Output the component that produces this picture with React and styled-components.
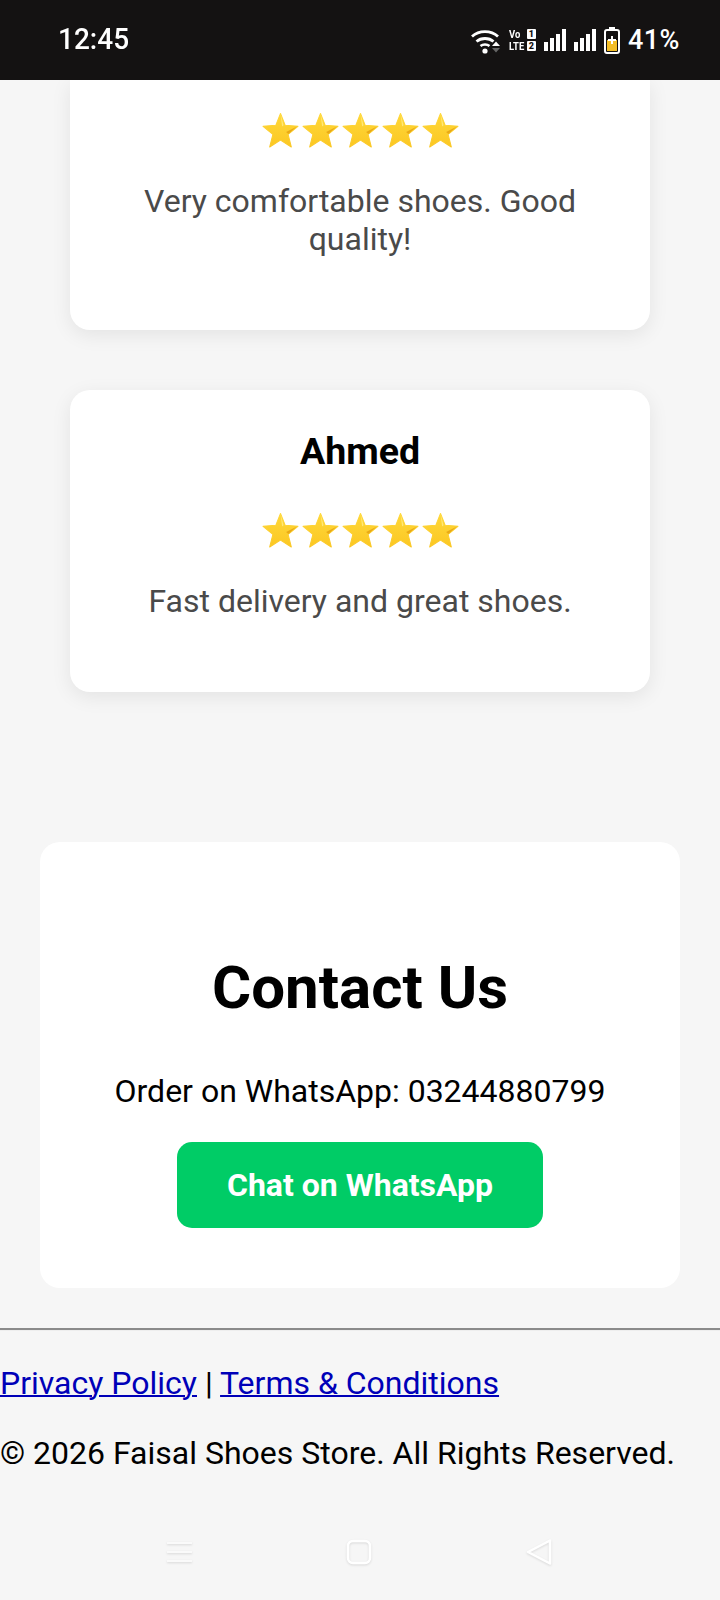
import React from "react";
import styled, { createGlobalStyle } from "styled-components";

const Global = createGlobalStyle`
  html, body { margin: 0; padding: 0; background: #f6f6f6; }
  body { font-family: Roboto, "Liberation Sans", sans-serif; }
`;
const Page = styled.div`
  width: 720px; height: 1600px; overflow: hidden; background: #f6f6f6;
  display: flex; flex-direction: column; color: #000;
`;
const StatusBar = styled.header`
  height: 80px; flex: none; background: #141212; color: #fff;
  display: flex; align-items: center; justify-content: space-between;
  padding: 0 40px 0 58px; position: relative; z-index: 2;
`;
const Clock = styled.span`font-size: 28px; font-weight: 500; line-height: 1; transform: scaleY(1.05);`;
const StatusIcons = styled.div`display: flex; align-items: center;`;
const Net = styled.div`
  display: grid; grid-template-columns: 18px 9px; font-size: 11.5px; line-height: 12px; font-weight: 700;
  margin: 0 8px 0 7px; width: 27px;
  & > span { transform: scaleX(.82); transform-origin: left; white-space: nowrap; }
  & > b { font-size: 9px; background: #fff; color: #141212; border-radius: 1px; line-height: 10px; height: 10px; text-align: center; margin-top: 1px; }
`;
const Percent = styled.span`font-size: 27px; font-weight: 500; letter-spacing: .5px; margin-left: 8px;`;
const Reviews = styled.section`
  display: flex; flex-direction: column; gap: 60px; padding: 0 70px; flex: none;
`;
const Card = styled.article`
  background: #fff; border-radius: ${p => (p.$cut ? "0 0 20px 20px" : "20px")};
  box-shadow: 0 5px 20px rgba(0,0,0,.08); text-align: center; height: ${p => p.$h}px;
  box-sizing: border-box; padding-top: ${p => p.$top}px;
`;
const Name = styled.h3`margin: 0 0 40px; font-size: 37.5px; line-height: 41px; font-weight: 700;`;
const Stars = styled.div`
  display: flex; justify-content: center; gap: 3px; height: 37px; margin-bottom: 33px;
`;
const Comment = styled.p`
  margin: 0; padding: 0 40px; font-size: 32px; line-height: 38px; color: #4a4a4a;
`;
const Contact = styled.section`
  margin: 150px 40px 0; height: 446px; box-sizing: border-box; flex: none; background: #fff; border-radius: 20px;
  padding-top: 113px; text-align: center; display: flex; flex-direction: column; align-items: center;
`;
const Title = styled.h2`margin: 0; font-size: 60px; line-height: 66px; font-weight: 700;`;
const Order = styled.p`margin: 52px 0 0; font-size: 32px; line-height: 36px;`;
const Chat = styled.a`
  display: flex; align-items: center; justify-content: center; margin-top: 33px;
  width: 366px; height: 86px; border-radius: 15px; background: #00cc66; color: #fff;
  font-size: 32px; font-weight: 700; text-decoration: none;
`;
const Rule = styled.hr`
  margin: 40px 0 0; height: 0; border: 0; border-top: 2px solid #8b8b8b; border-bottom: 1px solid #eee; flex: none;
`;
const Footer = styled.footer`font-size: 32px; line-height: 36px; flex: none;`;
const Links = styled.p`margin: 34px 0 0; color: #000;`;
const Legal = styled.a`color: #0000b8; text-decoration: underline; text-decoration-thickness: 2px;`;
const Copy = styled.p`margin: 34px 0 0; white-space: nowrap;`;
const NavBar = styled.nav`
  flex: none; margin-top: 66px; display: flex; justify-content: space-between; align-items: center;
  padding: 0 168px 0 167px; height: 30px;
`;

const Star = () => (
  <svg width="37" height="37" viewBox="0 0 36 36" aria-hidden="true">
    <defs>
      <linearGradient id="sg" x1="0" y1="0" x2="0" y2="1">
        <stop offset="0" stopColor="#ffd83a" />
        <stop offset="1" stopColor="#fbc723" />
      </linearGradient>
    </defs>
    <path d="M18 1.5 22.6 13 35 13.9 25.4 21.8 28.5 34 18 27.3 7.5 34 10.6 21.8 1 13.9 13.4 13Z" fill="url(#sg)" stroke="url(#sg)" strokeWidth="1" strokeLinejoin="round" />
    <path d="M18 2 21 13 19.6 14Z" fill="#ffe97a" />
    <path d="M34 14.2 25.6 21.4 23.5 19.5Z" fill="#e9a915" />
  </svg>
);
const FiveStars = () => <Stars>{[0,1,2,3,4].map(i => <Star key={i} />)}</Stars>;

const Wifi = () => (
  <svg width="32" height="27" viewBox="0 0 32 27" fill="none" aria-hidden="true">
    <path d="M2 9.500C9 3 21 3 28 9.500" stroke="#fff" strokeWidth="2.800" />
    <path d="M6.500 14.500C11 10.500 19 10.500 23.500 14.500" stroke="#fff" strokeWidth="2.800" />
    <path d="M10.500 19C13 17 17 17 19.500 19" stroke="#fff" strokeWidth="2.600" />
    <circle cx="15" cy="24" r="2.600" fill="#fff" />
    <path d="M26 14.500 30 19H22Z" fill="#fff" />
    <path d="M22 21H30L26 25.500Z" fill="#666" />
  </svg>
);
const SignalIcon = styled.svg`margin-right: 8px;`;
const Signal = () => (
  <SignalIcon width="22" height="22" viewBox="0 0 22 22" fill="#fff" aria-hidden="true">
    <rect x="0" y="13" width="4" height="9" />
    <rect x="6" y="9" width="4" height="13" />
    <rect x="12" y="5" width="4" height="17" />
    <rect x="18" y="0" width="4" height="22" />
  </SignalIcon>
);
const Battery = () => (
  <svg width="16" height="27" viewBox="0 0 16 27" aria-hidden="true">
    <rect x="5" y="0" width="6" height="3" fill="#fff" />
    <rect x="1" y="3" width="14" height="23" rx="2" fill="#141212" stroke="#fff" strokeWidth="2" />
    <rect x="3" y="13" width="10" height="11" fill="#f3bd25" />
    <path d="M7 9h2v3h3v2H9v3H7v-3H4v-2h3Z" fill="#fff" />
  </svg>
);
const NavIcon = styled.svg`overflow: visible; filter: drop-shadow(0 1px 1px rgba(0,0,0,.12));`;

export default function App() {
  return (
    <Page>
      <Global />
      <StatusBar>
        <Clock>12:45</Clock>
        <StatusIcons>
          <Wifi />
          <Net><span>Vo</span><b>1</b><span>LTE</span><b>2</b></Net>
          <Signal />
          <Signal />
          <Battery />
          <Percent>41%</Percent>
        </StatusIcons>
      </StatusBar>
      <Reviews>
        <Card $cut $h={250} $top={32}>
          <FiveStars />
          <Comment>Very comfortable shoes. Good quality!</Comment>
        </Card>
        <Card $h={302} $top={41}>
          <Name>Ahmed</Name>
          <FiveStars />
          <Comment>Fast delivery and great shoes.</Comment>
        </Card>
      </Reviews>
      <Contact>
        <Title>Contact Us</Title>
        <Order>Order on WhatsApp: 03244880799</Order>
        <Chat href="#">Chat on WhatsApp</Chat>
      </Contact>
      <Rule />
      <Footer>
        <Links><Legal href="#">Privacy Policy</Legal> | <Legal href="#">Terms &amp; Conditions</Legal></Links>
        <Copy>© 2026 Faisal Shoes Store. All Rights Reserved.</Copy>
      </Footer>
      <NavBar>
        <NavIcon width="25" height="24" viewBox="0 0 25 24" stroke="#fafafa" strokeWidth="2" aria-hidden="true">
          <path d="M0 3H25M0 12H25M0 21H25" />
        </NavIcon>
        <NavIcon width="24" height="24" viewBox="0 0 24 24" fill="none" stroke="#fff" strokeWidth="2.500" aria-hidden="true">
          <rect x="1" y="1" width="22" height="22" rx="5" />
        </NavIcon>
        <NavIcon width="26" height="26" viewBox="0 0 26 26" fill="none" stroke="#fff" strokeWidth="2.500" strokeLinejoin="round" aria-hidden="true">
          <path d="M24 1.500V24.500L2 13Z" />
        </NavIcon>
      </NavBar>
    </Page>
  );
}
